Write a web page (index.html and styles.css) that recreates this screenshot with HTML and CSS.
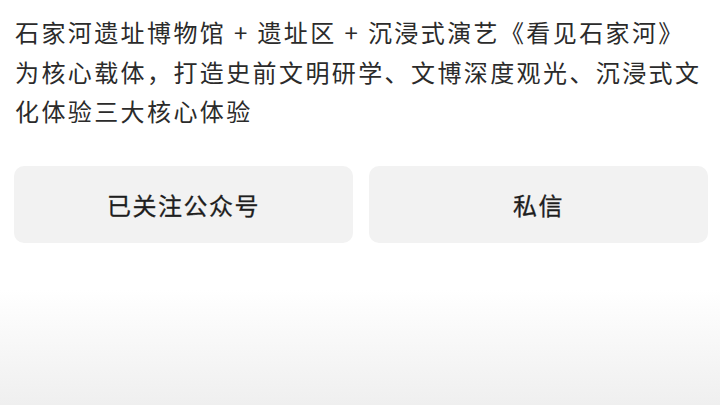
FILE: index.html
```html
<!DOCTYPE html>
<html lang="zh-CN">
<head>
  <meta charset="UTF-8">
  <title>石家河遗址</title>
  <link rel="stylesheet" href="styles.css">
</head>
<body>
  <div class="page">
    <p class="intro">石家河遗址博物馆 + 遗址区 + 沉浸式演艺《看见石家河》<br>为核心载体，打造史前文明研学、文博深度观光、沉浸式文<br>化体验三大核心体验</p>

    <div class="actions">
      <button class="act-btn">已关注公众号</button>
      <button class="act-btn">私信</button>
    </div>
  </div>
</body>
</html>
```

FILE: styles.css
```css
html, body {
  margin: 0;
  height: 100%;
}

body {
  font-family: "Noto Sans CJK SC", "Noto Sans", sans-serif;
  background: linear-gradient(to bottom, #ffffff 0px, #ffffff 290px, #efefef 405px);
  color: #2b2b2b;
}

.page {
  padding: 12px 12px 0 15px;
}

.intro {
  margin: 0;
  font-size: 24px;
  line-height: 39.5px;
  letter-spacing: 2.4px;
  white-space: nowrap;
}

.actions {
  display: flex;
  gap: 16px;
  margin-top: 35px;
  margin-left: -1px;
}

.act-btn {
  flex: 1;
  height: 77px;
  border: none;
  border-radius: 10px;
  background: #f2f2f2;
  color: #1e1e1e;
  font-family: inherit;
  font-size: 24px;
  font-weight: 400;
  letter-spacing: 1.5px;
  -webkit-text-stroke: 0.3px #1e1e1e;
}
```
